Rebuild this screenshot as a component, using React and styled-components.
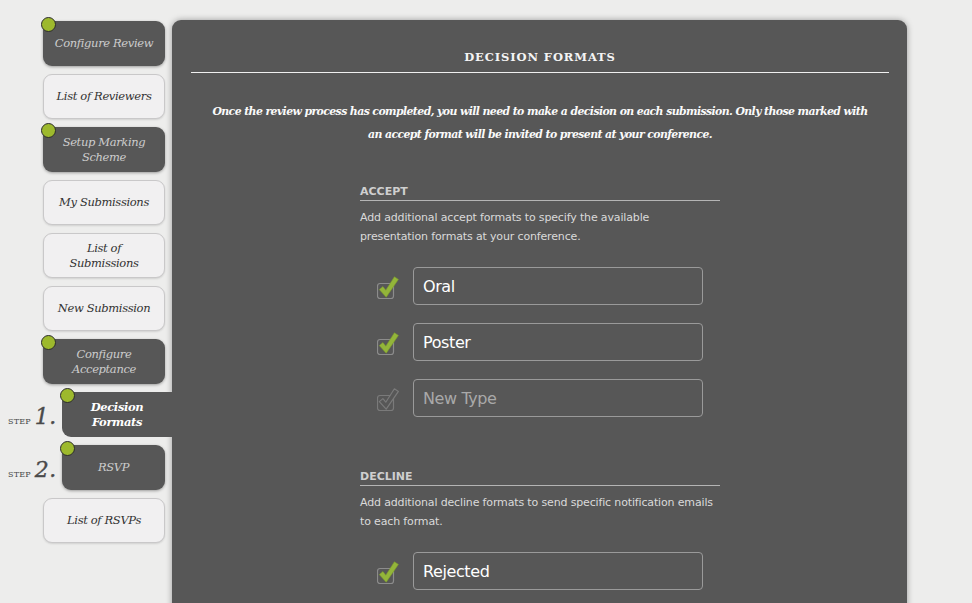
import React from "react";
import styled, { createGlobalStyle } from "styled-components";

const Global = createGlobalStyle`
  html, body { margin: 0; padding: 0; }
  body {
    background: #ededec;
    width: 972px;
    height: 603px;
    overflow: hidden;
  }
`;

const serif = `"DejaVu Serif", "Liberation Serif", serif`;
const sans = `"DejaVu Sans", "Liberation Sans", sans-serif`;

const Page = styled.div`
  display: flex;
  align-items: flex-start;
  padding-top: 20px;
  height: 583px;
  overflow: hidden;
`;

const Sidebar = styled.nav`
  width: 172px;
  flex: none;
  display: flex;
  flex-direction: column;
  gap: 8px;
  padding-top: 1px;
`;

const NavRow = styled.div`
  display: flex;
  align-items: center;
  padding-left: ${(p) => (p.$step ? "8px" : "43px")};
`;

const StepLabel = styled.div`
  width: 54px;
  display: flex;
  align-items: baseline;
  gap: 4px;
  color: #4a4a4a;
  font-family: ${serif};
  padding-top: 4px;
`;

const StepWord = styled.span`
  font-size: 8px;
  letter-spacing: 0.2px;
`;

const StepNum = styled.span`
  font-size: 22px;
  font-style: italic;
  letter-spacing: 0.5px;
  -webkit-text-stroke: 0.4px #4a4a4a;
`;

const NavItem = styled.div`
  position: relative;
  box-sizing: border-box;
  width: ${(p) => (p.$active ? "110px" : p.$step ? "103px" : "122px")};
  height: 45px;
  display: flex;
  align-items: center;
  justify-content: center;
  text-align: center;
  padding: 0 8px;
  font-family: ${serif};
  font-style: italic;
  font-size: 11.5px;
  line-height: 15px;
  letter-spacing: -0.35px;
  border-radius: ${(p) => (p.$active ? "9px 0 0 9px" : "9px")};
  background: ${(p) => (p.$dark ? "#575757" : "#f1f0f1")};
  color: ${(p) => (p.$active ? "#ffffff" : p.$dark ? "#cdcdcd" : "#333")};
  font-weight: ${(p) => (p.$active ? "bold" : "normal")};
  border: ${(p) => (p.$dark ? "none" : "1px solid #c9c8c9")};
  box-shadow: ${(p) =>
    p.$active ? "none" : p.$dark ? "0 1px 3px rgba(0,0,0,0.35)" : "0 1px 2px rgba(0,0,0,0.12)"};
  z-index: ${(p) => (p.$active ? 2 : 0)};
`;

const Dot = styled.span`
  position: absolute;
  left: -2px;
  top: -4px;
  width: 13px;
  height: 13px;
  border-radius: 50%;
  background: #9db92d;
  border: 1px solid #2c2c2c;
`;

const Panel = styled.main`
  width: 735px;
  flex: none;
  min-height: 600px;
  background: #575757;
  border-radius: 9px 9px 0 0;
  box-shadow: 0 0 6px rgba(0, 0, 0, 0.35);
  padding: 0 18px 0 19px;
  box-sizing: border-box;
  position: relative;
  z-index: 1;
`;

const Title = styled.h1`
  margin: 0;
  padding: 29px 0 7px;
  text-align: center;
  font-family: ${serif};
  font-size: 11.5px;
  font-weight: bold;
  letter-spacing: 0.9px;
  color: #f4f4f4;
  border-bottom: 1px solid #f0f0f0;
  line-height: 16px;
`;

const Intro = styled.p`
  margin: 0;
  padding: 27px 0 0;
  text-align: center;
  white-space: nowrap;
  font-family: ${serif};
  font-style: italic;
  font-weight: bold;
  font-size: 10.9px;
  letter-spacing: -0.6px;
  line-height: 23px;
  color: #fafafa;
`;

const Section = styled.section`
  width: 360px;
  margin: ${(p) => p.$mt} auto 0;
`;

const SectionHead = styled.h2`
  margin: 0;
  font-family: ${sans};
  font-size: 11px;
  font-weight: bold;
  color: #cfcfcf;
  line-height: 13px;
  padding-bottom: 2px;
  border-bottom: 1px solid #b4b4b4;
`;

const SectionDesc = styled.p`
  margin: 7px 0 0;
  font-family: ${sans};
  font-size: 11px;
  letter-spacing: -0.15px;
  line-height: 19px;
  color: #dadada;
  white-space: nowrap;
`;

const Rows = styled.div`
  display: flex;
  flex-direction: column;
  gap: 18px;
  margin-top: 21px;
`;

const Row = styled.div`
  display: flex;
  align-items: center;
  padding-left: 17px;
  gap: 14px;
`;

const Field = styled.div`
  box-sizing: border-box;
  width: 290px;
  height: 38px;
  border: 1px solid #9a9a9a;
  border-radius: 4px;
  display: flex;
  align-items: center;
  padding-left: 9px;
  font-family: ${sans};
  font-size: 16px;
  letter-spacing: -0.4px;
  color: ${(p) => (p.$placeholder ? "#a9a9a9" : "#ffffff")};
`;

const Check = ({ on }) => (
  <svg width="22" height="25" viewBox="0 0 22 25" style={{ flex: "none", marginTop: 2 }}>
    <rect x="0.5" y="8.5" width="16" height="15" rx="2.5" fill="none" stroke={on ? "#8c8c8c" : "#7a7a7a"} strokeWidth="1.2" />
    {on ? (
      <path d="M2.3 14.6 L5.9 11.6 L8.8 15.2 L17.4 1.8 L21.4 4.4 L9.2 22.2 Z" fill="#93b53a" stroke="#7d9e2a" strokeWidth="0.6" strokeLinejoin="round" />
    ) : (
      <path d="M2.3 14.6 L5.9 11.6 L8.8 15.2 L17.4 1.8 L21.4 4.4 L9.2 22.2 Z" fill="#575757" stroke="#7a7a7a" strokeWidth="1.2" strokeLinejoin="round" />
    )}
  </svg>
);

const nav = [
  { label: "Configure Review", dark: true, dot: true },
  { label: "List of Reviewers" },
  { label: "Setup Marking Scheme", dark: true, dot: true },
  { label: "My Submissions" },
  { label: "List of Submissions" },
  { label: "New Submission" },
  { label: "Configure Acceptance", dark: true, dot: true },
  { label: "Decision Formats", dark: true, dot: true, step: "1.", active: true },
  { label: "RSVP", dark: true, dot: true, step: "2." },
  { label: "List of RSVPs" },
];

const breakLabel = (l) => {
  const map = {
    "Setup Marking Scheme": ["Setup Marking", "Scheme"],
    "List of Submissions": ["List of", "Submissions"],
    "Configure Acceptance": ["Configure", "Acceptance"],
    "Decision Formats": ["Decision", "Formats"],
  };
  const parts = map[l];
  if (!parts) return l;
  return (
    <>
      {parts[0]}
      <br />
      {parts[1]}
    </>
  );
};

export default function App() {
  return (
    <>
      <Global />
      <Page>
        <Sidebar>
          {nav.map((n) => (
            <NavRow key={n.label} $step={!!n.step}>
              {n.step && (
                <StepLabel>
                  <StepWord>STEP</StepWord>
                  <StepNum>{n.step}</StepNum>
                </StepLabel>
              )}
              <NavItem $dark={n.dark} $active={n.active} $step={!!n.step}>
                {n.dot && <Dot />}
                <span>{breakLabel(n.label)}</span>
              </NavItem>
            </NavRow>
          ))}
        </Sidebar>
        <Panel>
          <Title>DECISION FORMATS</Title>
          <Intro>
            Once the review process has completed, you will need to make a decision on each submission. Only those marked with
            <br />
            an accept format will be invited to present at your conference.
          </Intro>
          <Section $mt="39px">
            <SectionHead>ACCEPT</SectionHead>
            <SectionDesc>
              Add additional accept formats to specify the available
              <br />
              presentation formats at your conference.
            </SectionDesc>
            <Rows>
              <Row>
                <Check on />
                <Field>Oral</Field>
              </Row>
              <Row>
                <Check on />
                <Field>Poster</Field>
              </Row>
              <Row>
                <Check />
                <Field $placeholder>New Type</Field>
              </Row>
            </Rows>
          </Section>
          <Section $mt="53px">
            <SectionHead>DECLINE</SectionHead>
            <SectionDesc>
              Add additional decline formats to send specific notification emails
              <br />
              to each format.
            </SectionDesc>
            <Rows>
              <Row>
                <Check on />
                <Field>Rejected</Field>
              </Row>
            </Rows>
          </Section>
        </Panel>
      </Page>
    </>
  );
}
